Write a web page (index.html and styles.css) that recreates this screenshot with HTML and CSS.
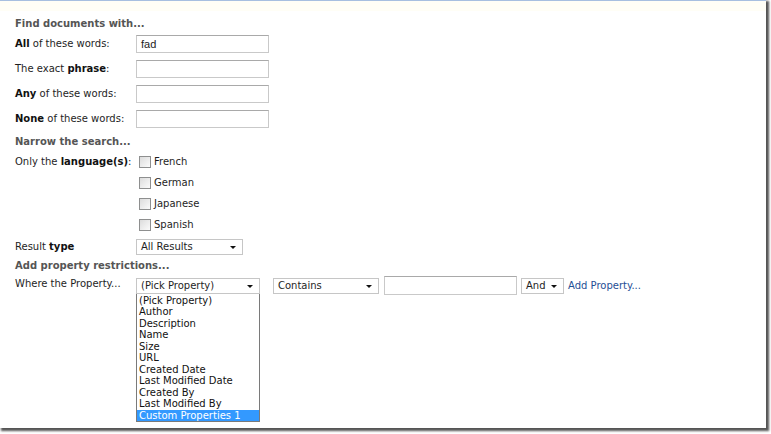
FILE: index.html
```html
<!DOCTYPE html>
<html>
<head>
<meta charset="utf-8">
<link rel="stylesheet" href="styles.css">
</head>
<body>
<div class="frame">
  <div class="band"></div>
  <div class="form">
    <div class="head h1">Find documents with...</div>
    <div class="row r-input"><div class="label"><b>All</b> of these words:</div><div class="field"><div class="input">fad</div></div></div>
    <div class="row r-input"><div class="label">The exact <b>phrase</b>:</div><div class="field"><div class="input"></div></div></div>
    <div class="row r-input"><div class="label"><b>Any</b> of these words:</div><div class="field"><div class="input"></div></div></div>
    <div class="row r-input"><div class="label"><b>None</b> of these words:</div><div class="field"><div class="input"></div></div></div>
    <div class="head h2">Narrow the search...</div>
    <div class="row langs">
      <div class="label lang-label">Only the <b>language(s)</b>:</div>
      <div class="field checks">
        <div class="check"><span class="box"></span>French</div>
        <div class="check"><span class="box"></span>German</div>
        <div class="check"><span class="box"></span>Japanese</div>
        <div class="check"><span class="box"></span>Spanish</div>
      </div>
    </div>
    <div class="row r-type"><div class="label">Result <b>type</b></div><div class="field"><div class="select sel-type">All Results<span class="arrow"></span></div></div></div>
    <div class="head h3">Add property restrictions...</div>
    <div class="row r-prop">
      <div class="label">Where the Property...</div>
      <div class="field propfields">
        <div class="picker">
          <div class="select sel-prop">(Pick Property)<span class="arrow"></span></div>
          <ul class="list">
            <li>(Pick Property)</li>
            <li>Author</li>
            <li>Description</li>
            <li>Name</li>
            <li>Size</li>
            <li>URL</li>
            <li>Created Date</li>
            <li>Last Modified Date</li>
            <li>Created By</li>
            <li>Last Modified By</li>
            <li class="sel">Custom Properties 1</li>
          </ul>
        </div>
        <div class="select sel-contains">Contains<span class="arrow"></span></div>
        <div class="input input-val"></div>
        <div class="select sel-and">And<span class="arrow"></span></div>
        <a class="addprop">Add Property...</a>
      </div>
    </div>
  </div>
</div>
</body>
</html>
```
FILE: styles.css
```css
html, body { margin: 0; padding: 0; background: #ffffff; }
body { width: 771px; height: 434px; overflow: hidden; font-family: "DejaVu Sans", Verdana, sans-serif; font-size: 10px; color: #1e1e1e; }
.frame {
  width: 766px; height: 428px; box-sizing: border-box;
  border-top: 1px solid #a7bfe0;
  box-shadow: 2px 2px 2px 1px #555;
  background: #fff; position: relative;
}
.band { height: 10px; background: #fffef6; }
.form { padding-left: 15px; }
.head { font-weight: bold; color: #555; line-height: 14px; height: 14px; }
.h1 { margin-top: 6px; }
.row { display: grid; grid-template-columns: 121px auto; align-items: center; }
.label { line-height: 14px; white-space: nowrap; }
.label b { color: #111; }
.r-input { height: 25px; }
.input {
  width: 133px; height: 18px; box-sizing: border-box;
  border: 1px solid #c9c9c9; border-top-color: #a9a9a9; background: #fff;
  font-family: "Liberation Sans", Arial, sans-serif; font-size: 11px; line-height: 16px; padding-left: 4px; color: #222;
}
.h2 { margin-top: 4px; }
.langs { align-items: start; margin-top: 6px; }
.lang-label { line-height: 14px; }
.checks { display: flex; flex-direction: column; gap: 7px; padding-left: 3px; }
.check { display: flex; align-items: center; height: 14px; line-height: 14px; }
.box { width: 10px; height: 10px; border: 1px solid #8e8f8f; background: linear-gradient(135deg, #dcdcdc, #fbfbfb); margin-right: 3px; box-sizing: content-box; }
.r-type { margin-top: 7px; height: 16px; }
.select {
  position: relative; height: 16px; box-sizing: border-box; border: 1px solid #c6c6c6; background: #fff;
  line-height: 14px; padding-left: 4px; white-space: nowrap;
}
.arrow { position: absolute; right: 6px; top: 6px; width: 0; height: 0; border-left: 3px solid transparent; border-right: 3px solid transparent; border-top: 3px solid #111; }
.sel-type { width: 107px; }
.h3 { margin-top: 4px; }
.r-prop { margin-top: 3px; align-items: start; }
.r-prop .label { line-height: 16px; }
.propfields { display: flex; align-items: center; }
.picker { position: relative; width: 124px; }
.sel-prop { width: 124px; }
.list {
  position: absolute; left: 0; top: 16px; margin: 0; padding: 1px 0 0 0; list-style: none;
  width: 124px; box-sizing: border-box; border: 1px solid #7a7a7a; border-top: none; background: #fff;
  font-family: "DejaVu Sans", Tahoma, sans-serif; font-size: 10px;
}
.list li { height: 11.5px; line-height: 11.5px; padding-left: 2px; color: #111; white-space: nowrap; }
.list li.sel { background: #3399ff; color: #fff; }
.sel-contains { width: 106px; margin-left: 13px; }
.input-val { width: 133px; margin-left: 5px; height: 19px; }
.sel-and { width: 43px; margin-left: 4px; }
.addprop { margin-left: 4px; color: #1f4f95; text-decoration: none; }
```
